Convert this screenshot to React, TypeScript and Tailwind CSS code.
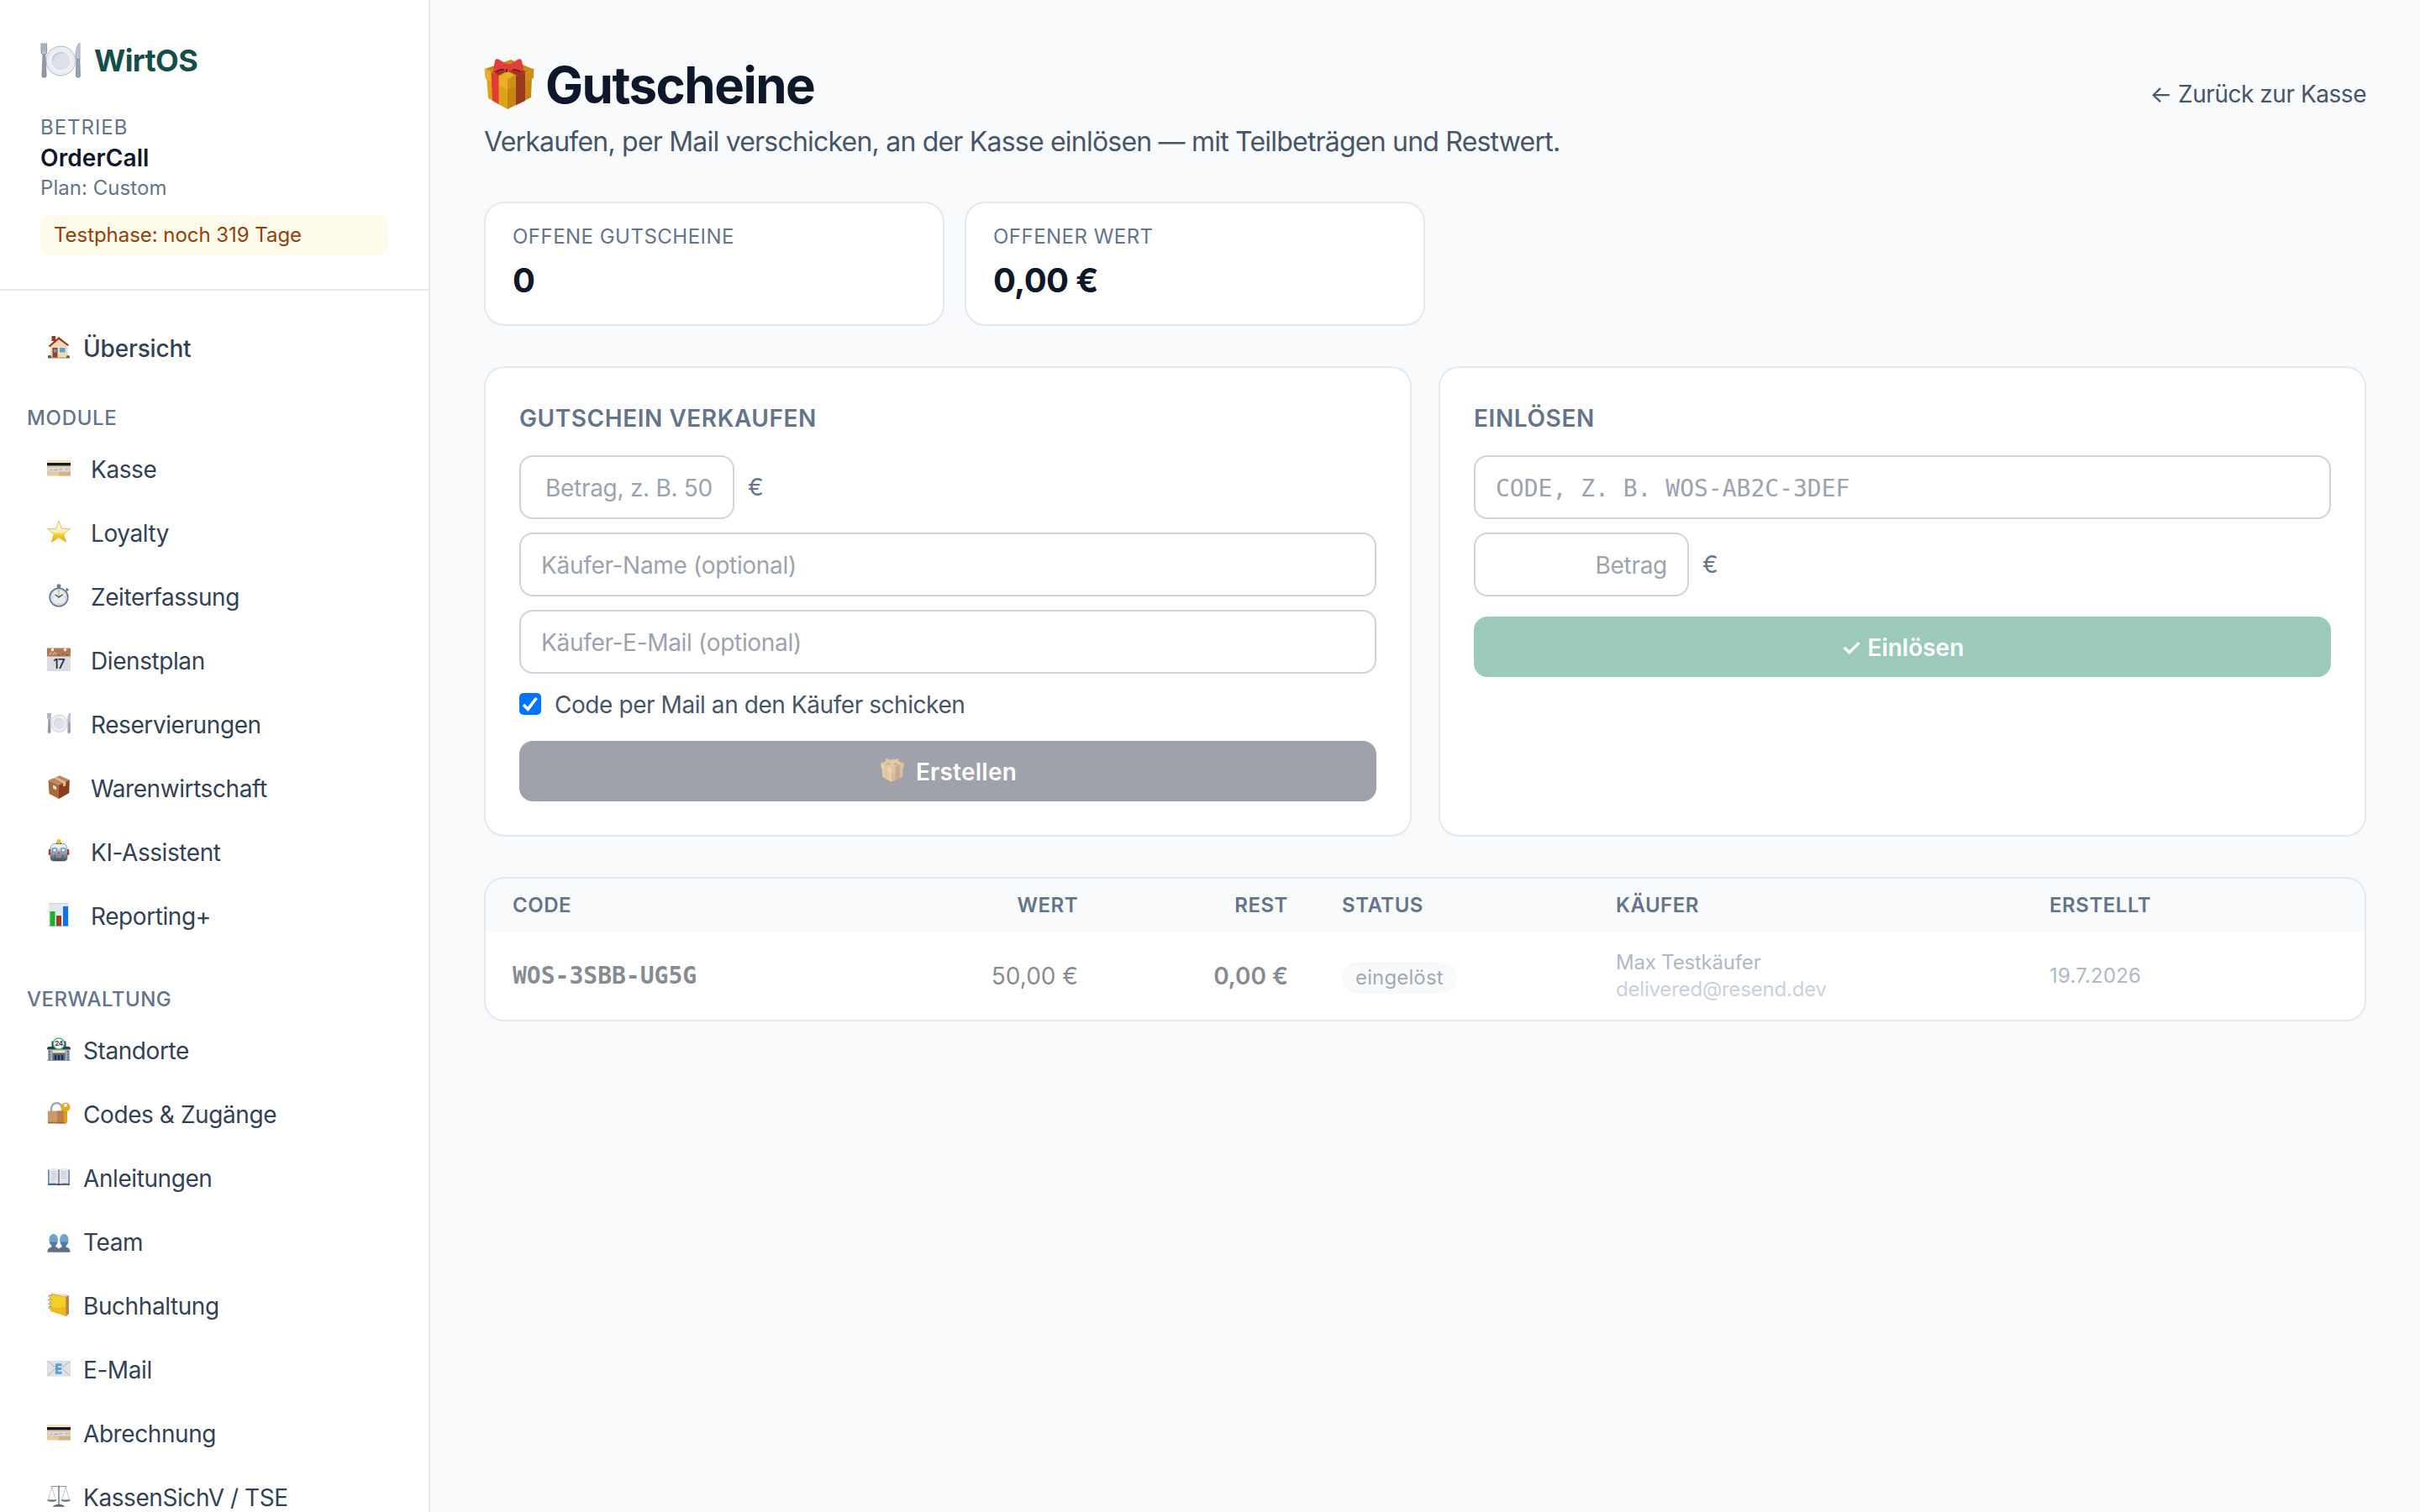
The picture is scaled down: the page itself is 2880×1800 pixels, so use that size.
import React, { useState } from 'react';

type IconProps = {
    className?: string;
};
type NavItem = {
    label: string;
    icon: (props: IconProps) => React.ReactElement;
};

/* Icons, all on a 28px grid */
function PlateIcon({ className = 'size-7' }: IconProps) {
    return (<svg viewBox="0 0 28 28" className={className} fill="none">
      <circle cx="14.2" cy="14.3" r="10.2" fill="#e9ecf0" stroke="#a9b1bd" strokeWidth="0.5"/>
      <circle cx="14.2" cy="14.3" r="7" fill="#dde0e6" stroke="#f5f6f8" strokeWidth="0.7"/>
      <path d="M8.6 14.5a5.6 5.6 0 0 1 7.6-5.4" stroke="#c2c8d1" strokeWidth="0.8"/>
      <path d="M0.6 2v6.2c0 1 .8 1.6 1.8 1.8s2-.7 2-1.8V2" fill="#c3c9d3" stroke="#8590a2" strokeWidth="0.6"/>
      <path d="M1.8 2v6M3.2 2v6" stroke="#8590a2" strokeWidth="0.5"/>
      <path d="M1.8 10h1.6l.8 14.6c0 1.6-3.2 1.6-3.1 0z" fill="#8f99aa" stroke="#6f7c92" strokeWidth="0.4"/>
      <path d="M27.5 2c-2.1.5-3 5-3 9.5l.6 1.8h2.4z" fill="#c0c5d2" stroke="#8e97a8" strokeWidth="0.4"/>
      <path d="M25.1 13.2h2.2l.4 11.5c0 1.500-3 1.500-3 0z" fill="#9aa3b3" stroke="#6f7c92" strokeWidth="0.4"/>
    </svg>);
}
function HouseIcon({ className = 'size-7' }: IconProps) {
    return (<svg viewBox="0 0 28 28" className={className}>
      <path d="M5.5 1h4.7v6H5.5z" fill="#8f3b20"/>
      <path d="M4 12.5 14 3.5l10.5 8.5v15H4z" fill="#eed9b2"/>
      <path d="M1.5 13 14 2l12 9.500-1 1.500L14 5 3.500 14z" fill="#b7352b"/>
      <path d="M3 13.300 14 4l10.800 8.500" fill="none" stroke="#7a2e22" strokeWidth="0.7"/>
      <path d="M6.500 15h6v12h-6z" fill="#8b4227"/>
      <path d="M8 16.500h3.400v4H8z" fill="#6b9cc4"/>
      <path d="M14.500 14.500h7.500v6.500h-7.500z" fill="#5f9fd0" stroke="#fff3da" strokeWidth="0.8"/>
      <path d="M1 24.500c2-1.500 4-.5 4.500 1.200V27.500H1zM23 25c1.500-1.500 3.500-1 4 .5v2h-4z" fill="#4d7350"/>
      <path d="M5.500 26.500h18v1.200h-18z" fill="#b99d74"/>
    </svg>);
}
function CardIcon({ className = 'size-7' }: IconProps) {
    return (<svg viewBox="0 0 28 28" className={className}>
      <rect y="5" width="28" height="18.500" rx="1.200" fill="#e5caa0"/>
      <path d="M0 6.200C0 5.500.5 5 1.200 5h25.600c.7 0 1.200.5 1.200 1.200V8H0z" fill="#f3e2bd"/>
      <path d="M0 8h28v3.400H0z" fill="#10172a"/>
      <path d="M2 14h24v3.800H2z" fill="#dcdfe5"/>
      <path d="M3.500 16.300h3M8 16.300h5M14.500 15.800h4M22 15.800h3" stroke="#7d8797" strokeWidth="0.8"/>
      <path d="M14 19h14v3.500a1 1 0 0 1-1 1H14z" fill="#d5b18a"/>
    </svg>);
}
function StarIcon({ className = 'size-7' }: IconProps) {
    return (<svg viewBox="0 0 28 28" className={className}>
      <defs>
        <linearGradient id="star" x1="0" y1="0" x2="0" y2="1">
          <stop offset="0.2" stopColor="#fdf6dc"/>
          <stop offset="0.5" stopColor="#fbf0b8"/>
          <stop offset="0.65" stopColor="#f4cf26"/>
          <stop offset="1" stopColor="#e5a41c"/>
        </linearGradient>
      </defs>
      <path d="M14 1.200l3.500 9 10 .4-7.700 6.200 2.800 9.700-8.600-5.600-8.600 5.600 2.800-9.700L.5 10.600l10-.4z" fill="url(#star)" stroke="#e0b23a" strokeWidth="0.8" strokeLinejoin="round"/>
    </svg>);
}
function StopwatchIcon({ className = 'size-7' }: IconProps) {
    return (<svg viewBox="0 0 28 28" className={className} fill="none">
      <rect x="11.700" y="0.500" width="4.600" height="4.500" rx="1" fill="#6f7a8c"/>
      <path d="M22.800 5.300l2.600 2.600M24.500 6.600l-2 2" stroke="#64748b" strokeWidth="1.700"/>
      <circle cx="14" cy="16" r="10.800" fill="#e8ebef" stroke="#64748b" strokeWidth="1.600"/>
      <circle cx="14" cy="16" r="8.900" stroke="#c3c9d3" strokeWidth="0.8"/>
      <path d="M14 8v1.500M14 22.500V24M6 16h1.500M20.500 16H22" stroke="#94a3b8" strokeWidth="0.8"/>
      <path d="M14 6.500V17" stroke="#e3b35c" strokeWidth="1"/>
      <path d="M9.800 13l4.200 3 4.800-3.300" stroke="#334155" strokeWidth="1.100"/>
    </svg>);
}
function CalendarIcon({ className = 'size-7' }: IconProps) {
    return (<svg viewBox="0 0 28 28" className={className}>
      <path d="M0 9h28v19H0z" fill="#d9dde3"/>
      <path d="M0 .5h28v10H0z" fill="#b07a55"/>
      <path d="M3 8.800 5.500 5M7 8.500l2-3.200M10 8.200l1-2.500" stroke="#e4c8a8" strokeWidth="1.100"/>
      <path d="M13 9h2M22 9h3M18 7.500h1.500" stroke="#b91c1c" strokeWidth="1"/>
      <circle cx="6.500" cy="2.500" r="1.700" fill="#fff"/>
      <circle cx="21.500" cy="2.500" r="1.700" fill="#fff"/>
      <text x="14" y="24.500" textAnchor="middle" fontFamily="Inter, sans-serif" fontSize="15.500" fontWeight="500" letterSpacing="-0.800" fill="#1e293b">17</text>
    </svg>);
}
function PackageIcon({ className = 'size-7' }: IconProps) {
    return (<svg viewBox="0 0 28 28" className={className}>
      <path d="M1.500 6 15 .3 26.800 5.500 14 11.500z" fill="#bd8560"/>
      <path d="M1.500 6 14 11.500V28L2.500 22z" fill="#a8693f"/>
      <path d="M26.800 5.500 14 11.500V28l12.300-7z" fill="#8b3d1e"/>
      <path d="M8.200 3.200 11 2l11.300 5.700v4.500l-3.200 1.300V9z" fill="#dcbd94"/>
      <path d="M7 11.500l4 2v4l-4-2.200z" fill="#dfe2e6"/>
    </svg>);
}
function RobotIcon({ className = 'size-7' }: IconProps) {
    return (<svg viewBox="0 0 28 28" className={className}>
      <defs>
        <linearGradient id="robot" x1="0" y1="0" x2="0" y2="1">
          <stop offset="0.2" stopColor="#eceeed"/>
          <stop offset="0.5" stopColor="#a3abb6"/>
          <stop offset="1" stopColor="#3f4c5a"/>
        </linearGradient>
      </defs>
      <path d="M2 12h3v7H3c-1 0-1.500-.8-1.500-1.500zM26 12h-3v7h2c1 0 1.500-.8 1.500-1.500z" fill="#b5372a"/>
      <path d="M11 4h6v2.500h-6z" fill="#475569"/>
      <circle cx="14" cy="2.700" r="2.600" fill="#eebd2c"/>
      <path d="M9 5.500h10c3.500 0 5 3 5 7.500v9c0 2.800-1.500 4-4 4H8c-2.500 0-4-1.200-4-4v-9c0-4.500 1.500-7.500 5-7.500z" fill="url(#robot)" stroke="#566477" strokeWidth="0.600"/>
      <circle cx="9" cy="13" r="2.500" fill="#fff" stroke="#5b9bc8" strokeWidth="1.500"/>
      <circle cx="19.300" cy="13" r="2.500" fill="#fff" stroke="#5b9bc8" strokeWidth="1.500"/>
      <path d="M14 14l1.700 3.500h-3.400z" fill="#dc4632"/>
      <path d="M9 19h10v1.200c0 1.500-1.300 2.300-5 2.300s-5-.8-5-2.300z" fill="#334155"/>
      <path d="M11 19v3M13 19v3.300M15 19v3.300M17 19v3" stroke="#e2e8f0" strokeWidth="0.900"/>
    </svg>);
}
function ChartIcon({ className = 'size-7' }: IconProps) {
    return (<svg viewBox="0 0 28 28" className={className}>
      <path d="M2 0h24v28H2z" fill="#e3e7ee"/>
      <path d="M2 .5h24" stroke="#c6cdd8" strokeWidth="0.800"/>
      <path d="M3.500 10h6v17.500h-6z" fill="#13b524"/>
      <path d="M11 15h6v12.500h-6z" fill="#a23a22"/>
      <path d="M19 4h6v23.500h-6z" fill="#0a72f0"/>
      <path d="M2 27.500h24" stroke="#a9b1bd" strokeWidth="0.800"/>
    </svg>);
}
function StoreIcon({ className = 'size-7' }: IconProps) {
    return (<svg viewBox="0 0 28 28" className={className}>
      <path d="M5.500 4.500h17V15h-17z" fill="#32435a"/>
      <path d="M1 12h26v15.500H1z" fill="#a5adb9"/>
      <path d="M0 12.500 1.500 11h25l1.500 1.500v1.700H0z" fill="#334155"/>
      <path d="M3 16v11M25 16v11" stroke="#475569" strokeWidth="1.400" strokeDasharray="2 1.200"/>
      <path d="M6.500 16h15v11.500h-15z" fill="#566580"/>
      <path d="M6.500 15.500h15v3h-15z" fill="#f3e4c0"/>
      <path d="M10 21v6.500M14 21v6.500M18 21v6.500" stroke="#1e293b" strokeWidth="1.800"/>
      <path d="M0 27.500h28" stroke="#94a3b8"/>
      <circle cx="14" cy="7.500" r="6.600" fill="#fff" stroke="#3fae68" strokeWidth="1.300"/>
      <text x="14" y="10.400" textAnchor="middle" fontFamily="Inter, sans-serif" fontSize="8" fontWeight="700" letterSpacing="-0.300" fill="#334155">24</text>
    </svg>);
}
function LockIcon({ className = 'size-7' }: IconProps) {
    return (<svg viewBox="0 0 28 28" className={className} fill="none">
      <path d="M5 13V9c0-4 3-6.800 6.500-6.800S18 5 18 9v4" stroke="#9aa4b3" strokeWidth="2.300"/>
      <rect x="0.800" y="11.500" width="21" height="15" rx="1" fill="#c99a6b"/>
      <path d="M12 11.500h9.800v15H12z" fill="#b87f4d"/>
      <path d="M1 25.500h21" stroke="#9a5f35" strokeWidth="1.300"/>
      <path d="M20 12h4v13l-2 2-2-2z" fill="#dd9d17"/>
      <circle cx="22" cy="7" r="5.500" fill="#e5a81f"/>
      <circle cx="22" cy="4.800" r="2" fill="#fff"/>
    </svg>);
}
function BookIcon({ className = 'size-7' }: IconProps) {
    return (<svg viewBox="0 0 28 28" className={className}>
      <path d="M1 5.500h26v18.200H1z" fill="#6a93b5"/>
      <path d="M2.800 4.500c4-.8 8-.5 11.200.8 3.200-1.300 7.200-1.600 11.200-.8v17.200c-4-.6-8-.4-11.200 1-3.200-1.400-7.200-1.600-11.200-1z" fill="#e4e7eb"/>
      <path d="M14 5.300v17.500" stroke="#6d7b8e" strokeWidth="1.500"/>
      <path d="M5 8h6.500M5 10.500h6.500M5 13h6.500M5 15.500h6.500M5 18h4M16.500 8H23M16.500 10.500H23M16.500 13H23M16.500 15.500H23" stroke="#b9c0ca" strokeWidth="0.900"/>
      <path d="M1 23.200h26" stroke="#33475d" strokeWidth="1.200"/>
      <path d="M12.500 22.500h3v1.700h-3z" fill="#a0281f"/>
    </svg>);
}
function TeamIcon({ className = 'size-7' }: IconProps) {
    return (<svg viewBox="0 0 28 28" className={className}>
      <path d="M.5 27.800c0-4 1.500-5.300 5-6.300V17h4.800v4.500c2 .5 3.200 1 3.700 2.500.5-1.500 1.700-2 3.700-2.500V17h4.800v4.500c3.500 1 5 2.300 5 6.300z" fill="#5f7085"/>
      <ellipse cx="7.700" cy="12.700" rx="5.300" ry="6.700" fill="#6da3cd"/>
      <ellipse cx="20.300" cy="12.700" rx="5.300" ry="6.700" fill="#6da3cd"/>
      <path d="M2.800 15.500c.7 3.500 2.600 5 4.900 5s4.200-1.500 4.900-5zM15.400 15.500c.7 3.500 2.600 5 4.900 5s4.200-1.500 4.900-5z" fill="#557a9d"/>
    </svg>);
}
function LedgerIcon({ className = 'size-7' }: IconProps) {
    return (<svg viewBox="0 0 28 28" className={className} fill="none">
      <path d="M5 .5 26 3v22l-3.500 3z" fill="#b98357"/>
      <path d="M4.500 1 22 4.800 26 3.500 9 .5z" fill="#efe2c6"/>
      <path d="M4 1.800 22.500 4.800V28L4 21.800z" fill="#f3cf2a"/>
      <path d="M4 17.500c6 1 12 1 18.500-2V28L4 21.800z" fill="#ecb922"/>
      <path d="M22.500 4.800V28" stroke="#d9971a"/>
      <path d="M5.500 3.500c-4-1.500-5 1-1.500 2.300M5.500 8c-4-1.500-5 1-1.500 2.300M5.500 12.500c-4-1.500-5 1-1.500 2.300M5.500 17c-4-1.500-5 1-1.500 2.300" stroke="#8a7a62" strokeWidth="1"/>
    </svg>);
}
function MailIcon({ className = 'size-7' }: IconProps) {
    return (<svg viewBox="0 0 28 28" className={className} fill="none">
      <rect x="0.300" y="5.300" width="27.400" height="17.700" fill="#dfe3e8" stroke="#cbd1d9" strokeWidth="0.600"/>
      <path d="M1 5.800l13 10 13-10M1 22.500l9.500-9M27 22.500l-9.500-9" stroke="#a3acb9" strokeWidth="0.900"/>
      <path d="M17.500 9.700h-6v9.600h6M11.500 14.500h5.500" stroke="#5b9fd0" strokeWidth="2.900"/>
    </svg>);
}
function ScalesIcon({ className = 'size-7' }: IconProps) {
    return (<svg viewBox="0 0 28 28" className={className} fill="none">
      <path d="M14 1.500v23" stroke="#7d899b" strokeWidth="1.700"/>
      <path d="M4.500 3c3-1.500 6 .3 9.500-.5 3.500.8 6.500-1 9.500.5" stroke="#7d899b" strokeWidth="1.100"/>
      <path d="M5.800 3 1.200 19M5.800 3l4.500 16M22.200 3l-4.500 16M22.200 3l4.600 16" stroke="#a5aebb" strokeWidth="0.700"/>
      <path d="M.3 18.800h11c-.8 2.200-10.200 2.200-11 0zM16.700 18.800h11c-.8 2.200-10.200 2.200-11 0z" fill="#64748b" stroke="#64748b" strokeWidth="0.700"/>
      <path d="M7 26.800c.3-2 3-2 4.500-2.800h5c1.500.8 4.200.8 4.500 2.800z" fill="#56657a"/>
    </svg>);
}
function GiftIcon({ className = 'size-7' }: IconProps) {
    return (<svg viewBox="0 0 60 60" className={className}>
      <path d="M1 12 32 1l27 11.500L28 25z" fill="#c98a16"/>
      <path d="M3 20l25 12v28L5 47z" fill="#dfa01c"/>
      <path d="M57 20 28 32v28l28-14z" fill="#c58514"/>
      <path d="M.5 11.500 28 24.500V37L1.500 23.500z" fill="#eab024"/>
      <path d="M59.500 11.500 28 24.500V37l31-14z" fill="#cf9018"/>
      <path d="M8.500 15.500l9 4.300V54l-7.500-4.300z" fill="#e23a35"/>
      <path d="M38 20.500l11-4.700V50l-11 5.300z" fill="#99391d"/>
      <path d="M10 15l20-8 20 8-10 5-12-6-11 6z" fill="#a8301d"/>
      <path d="M28 15.500l8 4-8 5.500-9-4.500z" fill="#e9b02c"/>
      <path d="M13 3c0-3 2.500-3.500 5-2l9 5h5l8-5c2.500-1.500 5-1 5 2l2 8c.3 3-2 4-4 3.500L32 14h-6l-10 1c-2.500 0-5-1-4.500-4z" fill="#e43c3b"/>
      <path d="M15 15.300c3-2.500 6-2.800 9-2M34 13.300c3-.8 6 0 9 2M27 12v4" fill="none" stroke="#5d1a1e" strokeWidth="1.600"/>
    </svg>);
}
/* Gift as it shows on the disabled button */
function GiftMutedIcon({ className = 'size-7' }: IconProps) {
    return (<svg viewBox="0 0 60 60" className={className}>
      <path d="M1 12 32 1l27 11.500L28 25z" fill="#dcc6a4"/>
      <path d="M3 20l25 12v28L5 47z" fill="#e6cea6"/>
      <path d="M57 20 28 32v28l28-14z" fill="#d9bf98"/>
      <path d="M.5 11.500 28 24.500V37L1.500 23.500z" fill="#ecd5aa"/>
      <path d="M59.500 11.500 28 24.500V37l31-14z" fill="#dfc49b"/>
      <path d="M8.500 15.500l9 4.300V54l-7.500-4.300z" fill="#e5c3a0"/>
      <path d="M38 20.500l11-4.700V50l-11 5.300z" fill="#c9a98d"/>
      <path d="M13 3c0-3 2.500-3.500 5-2l9 5h5l8-5c2.500-1.500 5-1 5 2l2 8c.3 3-2 4-4 3.500L32 14h-6l-10 1c-2.500 0-5-1-4.500-4z" fill="#e6c6a3"/>
      <path d="M15 15.300c3-2.500 6-2.800 9-2M34 13.300c3-.8 6 0 9 2" fill="none" stroke="#ae9683" strokeWidth="2"/>
    </svg>);
}

const MODULE_ITEMS: NavItem[] = [
    { label: 'Kasse', icon: CardIcon },
    { label: 'Loyalty', icon: StarIcon },
    { label: 'Zeiterfassung', icon: StopwatchIcon },
    { label: 'Dienstplan', icon: CalendarIcon },
    { label: 'Reservierungen', icon: PlateIcon },
    { label: 'Warenwirtschaft', icon: PackageIcon },
    { label: 'KI-Assistent', icon: RobotIcon },
    { label: 'Reporting+', icon: ChartIcon },
];
const ADMIN_ITEMS: NavItem[] = [
    { label: 'Standorte', icon: StoreIcon },
    { label: 'Codes & Zugänge', icon: LockIcon },
    { label: 'Anleitungen', icon: BookIcon },
    { label: 'Team', icon: TeamIcon },
    { label: 'Buchhaltung', icon: LedgerIcon },
    { label: 'E-Mail', icon: MailIcon },
    { label: 'Abrechnung', icon: CardIcon },
    { label: 'KassenSichV / TSE', icon: ScalesIcon },
];
const STATS = [
    { label: 'Offene Gutscheine', value: '0' },
    { label: 'Offener Wert', value: '0,00 €' },
];
const VOUCHERS = [
    { code: 'WOS-3SBB-UG5G', value: '50,00 €', rest: '0,00 €', status: 'eingelöst', buyer: 'Max Testkäufer', email: 'delivered@resend.dev', created: '19.7.2026' },
];
const INPUT = 'block h-[76px] rounded-2xl border-2 border-[#cbd5e1] bg-white px-6 pt-0.5 text-[28px] leading-10 outline-none placeholder:text-[#9ca3af]';

function NavLink({ item, wide }: { item: NavItem; wide?: boolean }) {
    const Icon = item.icon;
    return (<a href="#" className={`flex h-[72px] items-center rounded-2xl px-6 text-[28px] leading-10 tracking-[-0.015em] text-[#334155] ${wide ? 'gap-6' : 'gap-[15px]'}`}>
      <Icon className="mb-0.5 size-7 shrink-0"/>
      <span className="pt-0.5">{item.label}</span>
    </a>);
}

function Sidebar() {
    return (<aside className="flex w-[512px] shrink-0 flex-col overflow-hidden border-r-2 border-[#e2e8f0] bg-white">
      <div className="border-b-2 border-[#e2e8f0] px-12 pt-12 pb-10">
        <div className="mb-10 flex h-12 items-center gap-4">
          <PlateIcon className="size-12 shrink-0"/>
          <span className="text-[36px] leading-[48px] font-bold tracking-[-0.018em] text-[#134e4a]">WirtOS</span>
        </div>
        <div className="text-2xl leading-8 tracking-[0.04em] text-[#64748b] uppercase">Betrieb</div>
        <div className="text-[28px] leading-10 font-semibold tracking-[0.004em] text-[#0f172a]">OrderCall</div>
        <div className="text-2xl leading-8 tracking-[0.002em] text-[#64748b]">Plan: Custom</div>
        <div className="mt-4 rounded-xl bg-[#fffbeb] px-4 py-2 text-2xl leading-8 tracking-[-0.002em] text-[#92400e]">Testphase: noch 319 Tage</div>
      </div>
      <nav className="flex flex-col px-8 pt-8">
        <a href="#" className="flex h-[72px] items-center gap-[15px] rounded-2xl px-6 text-[28px] leading-10 font-medium tracking-[-0.006em] text-[#334155]">
          <HouseIcon className="mb-0.5 size-7 shrink-0"/>
          <span className="pt-0.5">Übersicht</span>
        </a>

        {/* Module */}
        <div className="mt-8 mb-2 text-2xl leading-8 font-medium tracking-[0.028em] text-[#64748b] uppercase">Module</div>
        <div className="flex flex-col gap-1">
          {MODULE_ITEMS.map((item) => (<NavLink key={item.label} item={item} wide/>))}
        </div>

        {/* Verwaltung */}
        <div className="mt-12 mb-2 text-2xl leading-8 font-medium tracking-[0.02em] text-[#64748b] uppercase">Verwaltung</div>
        <div className="flex flex-col gap-1">
          {ADMIN_ITEMS.map((item) => (<NavLink key={item.label} item={item}/>))}
        </div>
      </nav>
    </aside>);
}

function SellCard() {
    const [sendMail, setSendMail] = useState(true);
    return (<section className="rounded-3xl border-2 border-[#e2e8f0] bg-white p-10">
      <h2 className="mb-6 text-[28px] leading-10 font-semibold tracking-[0.02em] text-[#64748b] uppercase">Gutschein verkaufen</h2>
      <div className="flex flex-col gap-4">
        <div className="flex items-center gap-4">
          <input type="text" placeholder="Betrag, z. B. 50" className={`${INPUT} w-64 text-right tracking-[-0.01em]`}/>
          <span className="text-[28px] leading-10 text-[#64748b]">€</span>
        </div>
        <input type="text" placeholder="Käufer-Name (optional)" className={`${INPUT} w-full tracking-[-0.011em]`}/>
        <input type="text" placeholder="Käufer-E-Mail (optional)" className={`${INPUT} w-full tracking-[-0.011em]`}/>
        <label className="flex h-10 items-center gap-4 text-[28px] leading-10 tracking-[-0.0155em] text-[#475569]">
          <span className="relative flex size-[26px] items-center justify-center">
            <input type="checkbox" checked={sendMail} onChange={(e) => setSendMail(e.target.checked)} className="size-[26px] appearance-none rounded-[5px] border-2 border-[#767676] checked:border-0 checked:bg-[#0075ff]"/>
            {sendMail && (<svg viewBox="0 0 26 26" className="pointer-events-none absolute inset-0 size-[26px]" fill="none">
              <path d="M5 14l5.300 5.200L20.500 6" stroke="#fff" strokeWidth="3.600"/>
            </svg>)}
          </span>
          <span className="pt-0.5">Code per Mail an den Käufer schicken</span>
        </label>
      </div>
      <button type="button" disabled className="mt-6 flex h-[72px] w-full items-center justify-center gap-[14px] rounded-2xl bg-[#9fa2aa] pl-0.5 text-[28px] leading-10 font-semibold tracking-[0.009em] text-white">
        <GiftMutedIcon className="mb-0.5 size-7"/>
        <span className="pt-px">Erstellen</span>
      </button>
    </section>);
}

function RedeemCard() {
    return (<section className="rounded-3xl border-2 border-[#e2e8f0] bg-white p-10">
      <h2 className="mb-6 text-[28px] leading-10 font-semibold tracking-[0.022em] text-[#64748b] uppercase">Einlösen</h2>
      <div className="flex flex-col gap-4">
        <input type="text" placeholder="Code, z. B. WOS-AB2C-3DEF" className={`${INPUT} w-full font-['DejaVu_Sans_Mono',monospace] uppercase`}/>
        <div className="flex items-center gap-4">
          <input type="text" placeholder="Betrag" className={`${INPUT} w-64 text-right tracking-[-0.01em]`}/>
          <span className="text-[28px] leading-10 text-[#64748b]">€</span>
        </div>
      </div>
      <button type="button" disabled className="mt-6 h-[72px] w-full rounded-2xl bg-[#9bc9bc] pt-px text-[28px] leading-10 font-semibold text-white">✓ Einlösen</button>
    </section>);
}

function VoucherTable() {
    return (<div className="mt-12 overflow-hidden rounded-3xl border-2 border-[#e2e8f0] bg-white">
      <table className="w-full table-fixed border-collapse text-left">
        <colgroup>
          <col className="w-[508px]"/>
          <col className="w-[229px]"/>
          <col className="w-[250px]"/>
          <col className="w-[326px]"/>
          <col className="w-[516px]"/>
          <col />
        </colgroup>
        <thead className="bg-[#f8fafc] text-2xl leading-8 tracking-[0.022em] text-[#64748b] uppercase">
          <tr>
            <th className="px-8 py-4 font-semibold">Code</th>
            <th className="px-8 py-4 text-right font-semibold">Wert</th>
            <th className="px-8 py-4 text-right font-semibold">Rest</th>
            <th className="px-8 py-4 font-semibold">Status</th>
            <th className="px-8 py-4 font-semibold">Käufer</th>
            <th className="px-8 py-4 font-semibold">Erstellt</th>
          </tr>
        </thead>
        <tbody>
          {VOUCHERS.map((v) => (<tr key={v.code} className="text-[28px] leading-10 text-[#0f172a] opacity-50">
            <td className="px-8 py-5 font-['DejaVu_Sans_Mono',monospace] font-bold">{v.code}</td>
            <td className="px-8 py-5 text-right">{v.value}</td>
            <td className="px-8 py-5 text-right font-semibold">{v.rest}</td>
            <td className="px-8 py-5">
              <span className="inline-block rounded-full bg-[#f1f5f9] px-4 py-[3px] text-2xl leading-8 tracking-[0.006em] text-[#475569]">{v.status}</span>
            </td>
            <td className="px-8 py-5 text-2xl leading-8 tracking-[-0.008em] text-[#64748b]">
              {v.buyer}
              <div className="text-[#94a3b8]">{v.email}</div>
            </td>
            <td className="px-8 py-5 text-2xl leading-8 tracking-[0.008em] text-[#64748b]">{v.created}</td>
          </tr>))}
        </tbody>
      </table>
    </div>);
}

export default function App() {
    return (<div className="flex h-[1800px] w-[2880px] overflow-hidden bg-[#f8fafc] font-['Inter',sans-serif] text-[#0f172a]">
      <Sidebar />
      <main className="min-w-0 flex-1 p-16">
        <header className="flex items-start justify-between">
          <div>
            <h1 className="flex items-center gap-[13px] text-[60px] leading-[72px] font-bold tracking-[-0.025em]">
              <GiftIcon className="mb-0.5 size-[60px]"/>
              <span className="pt-px">Gutscheine</span>
            </h1>
            <p className="mt-2 text-[32px] leading-[47px] tracking-[-0.0247em] text-[#475569]">Verkaufen, per Mail verschicken, an der Kasse einlösen — mit Teilbeträgen und Restwert.</p>
          </div>
          <a href="#" className="pt-7 text-[28px] leading-10 tracking-[-0.0167em] text-[#475569]">← Zurück zur Kasse</a>
        </header>

        <div className="mt-12 grid w-[1120px] grid-cols-2 gap-6">
          {STATS.map((s) => (<div key={s.label} className="rounded-3xl border-2 border-[#e2e8f0] bg-white px-8 py-6">
            <div className="text-2xl leading-8 tracking-[0.02em] text-[#64748b] uppercase">{s.label}</div>
            <div className="mt-2 text-[40px] leading-[56px] font-bold tracking-[-0.017em]">{s.value}</div>
          </div>))}
        </div>

        <div className="mt-12 grid grid-cols-2 gap-8">
          <SellCard />
          <RedeemCard />
        </div>

        <VoucherTable />
      </main>
    </div>);
}
